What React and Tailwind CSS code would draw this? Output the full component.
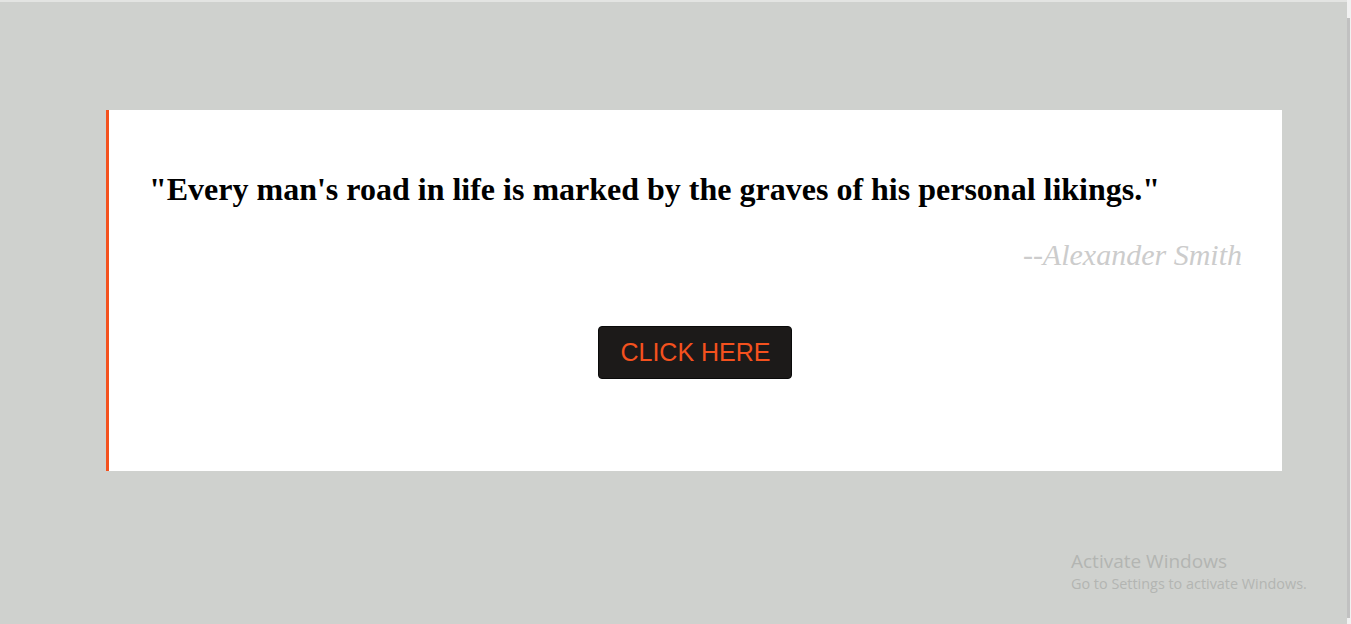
export default function App() {
  return (
    <div className="relative flex h-[624px] w-full overflow-hidden bg-[#cfd1ce]">
      <main className="flex-1 border-t-[2px] border-[#e3e4e2] pt-[108px] pl-[106px]">
        <section className="flex h-[361px] w-[1176px] flex-col border-l-[3px] border-[#f4511e] bg-white pl-[40px] pr-[40px] pt-[61px]">
          <p className="font-['Liberation_Serif',serif] text-[32px] font-bold leading-[36px] text-black">
            "Every man's road in life is marked by the graves of his personal likings."
          </p>
          <p className="mt-[30px] text-right font-['Liberation_Serif',serif] text-[30px] italic leading-[36px] text-[#cccccc]">
            --Alexander Smith
          </p>
          <div className="mt-[53px] flex justify-center pr-[1px]">
            <button className="h-[53px] w-[194px] rounded-[4px] border border-[#0a0a0a] bg-[#1c1a19] pl-px font-['Liberation_Sans',sans-serif] text-[25px] text-[#f4511e]">
              CLICK HERE
            </button>
          </div>
        </section>
      </main>
      <div className="flex w-[4px] flex-col bg-[#f1f1f1]">
        <div className="mt-[18px] h-[600px] w-[3px] bg-[#c1c1c1]" />
      </div>
      <div className="pointer-events-none absolute left-[1071px] top-[548px] font-['Open_Sans',sans-serif] text-[#b3b5b2]">
        <div className="text-[19px] leading-[26px]">Activate Windows</div>
        <div className="text-[14.4px] leading-[20px]">Go to Settings to activate Windows.</div>
      </div>
    </div>
  );
}
